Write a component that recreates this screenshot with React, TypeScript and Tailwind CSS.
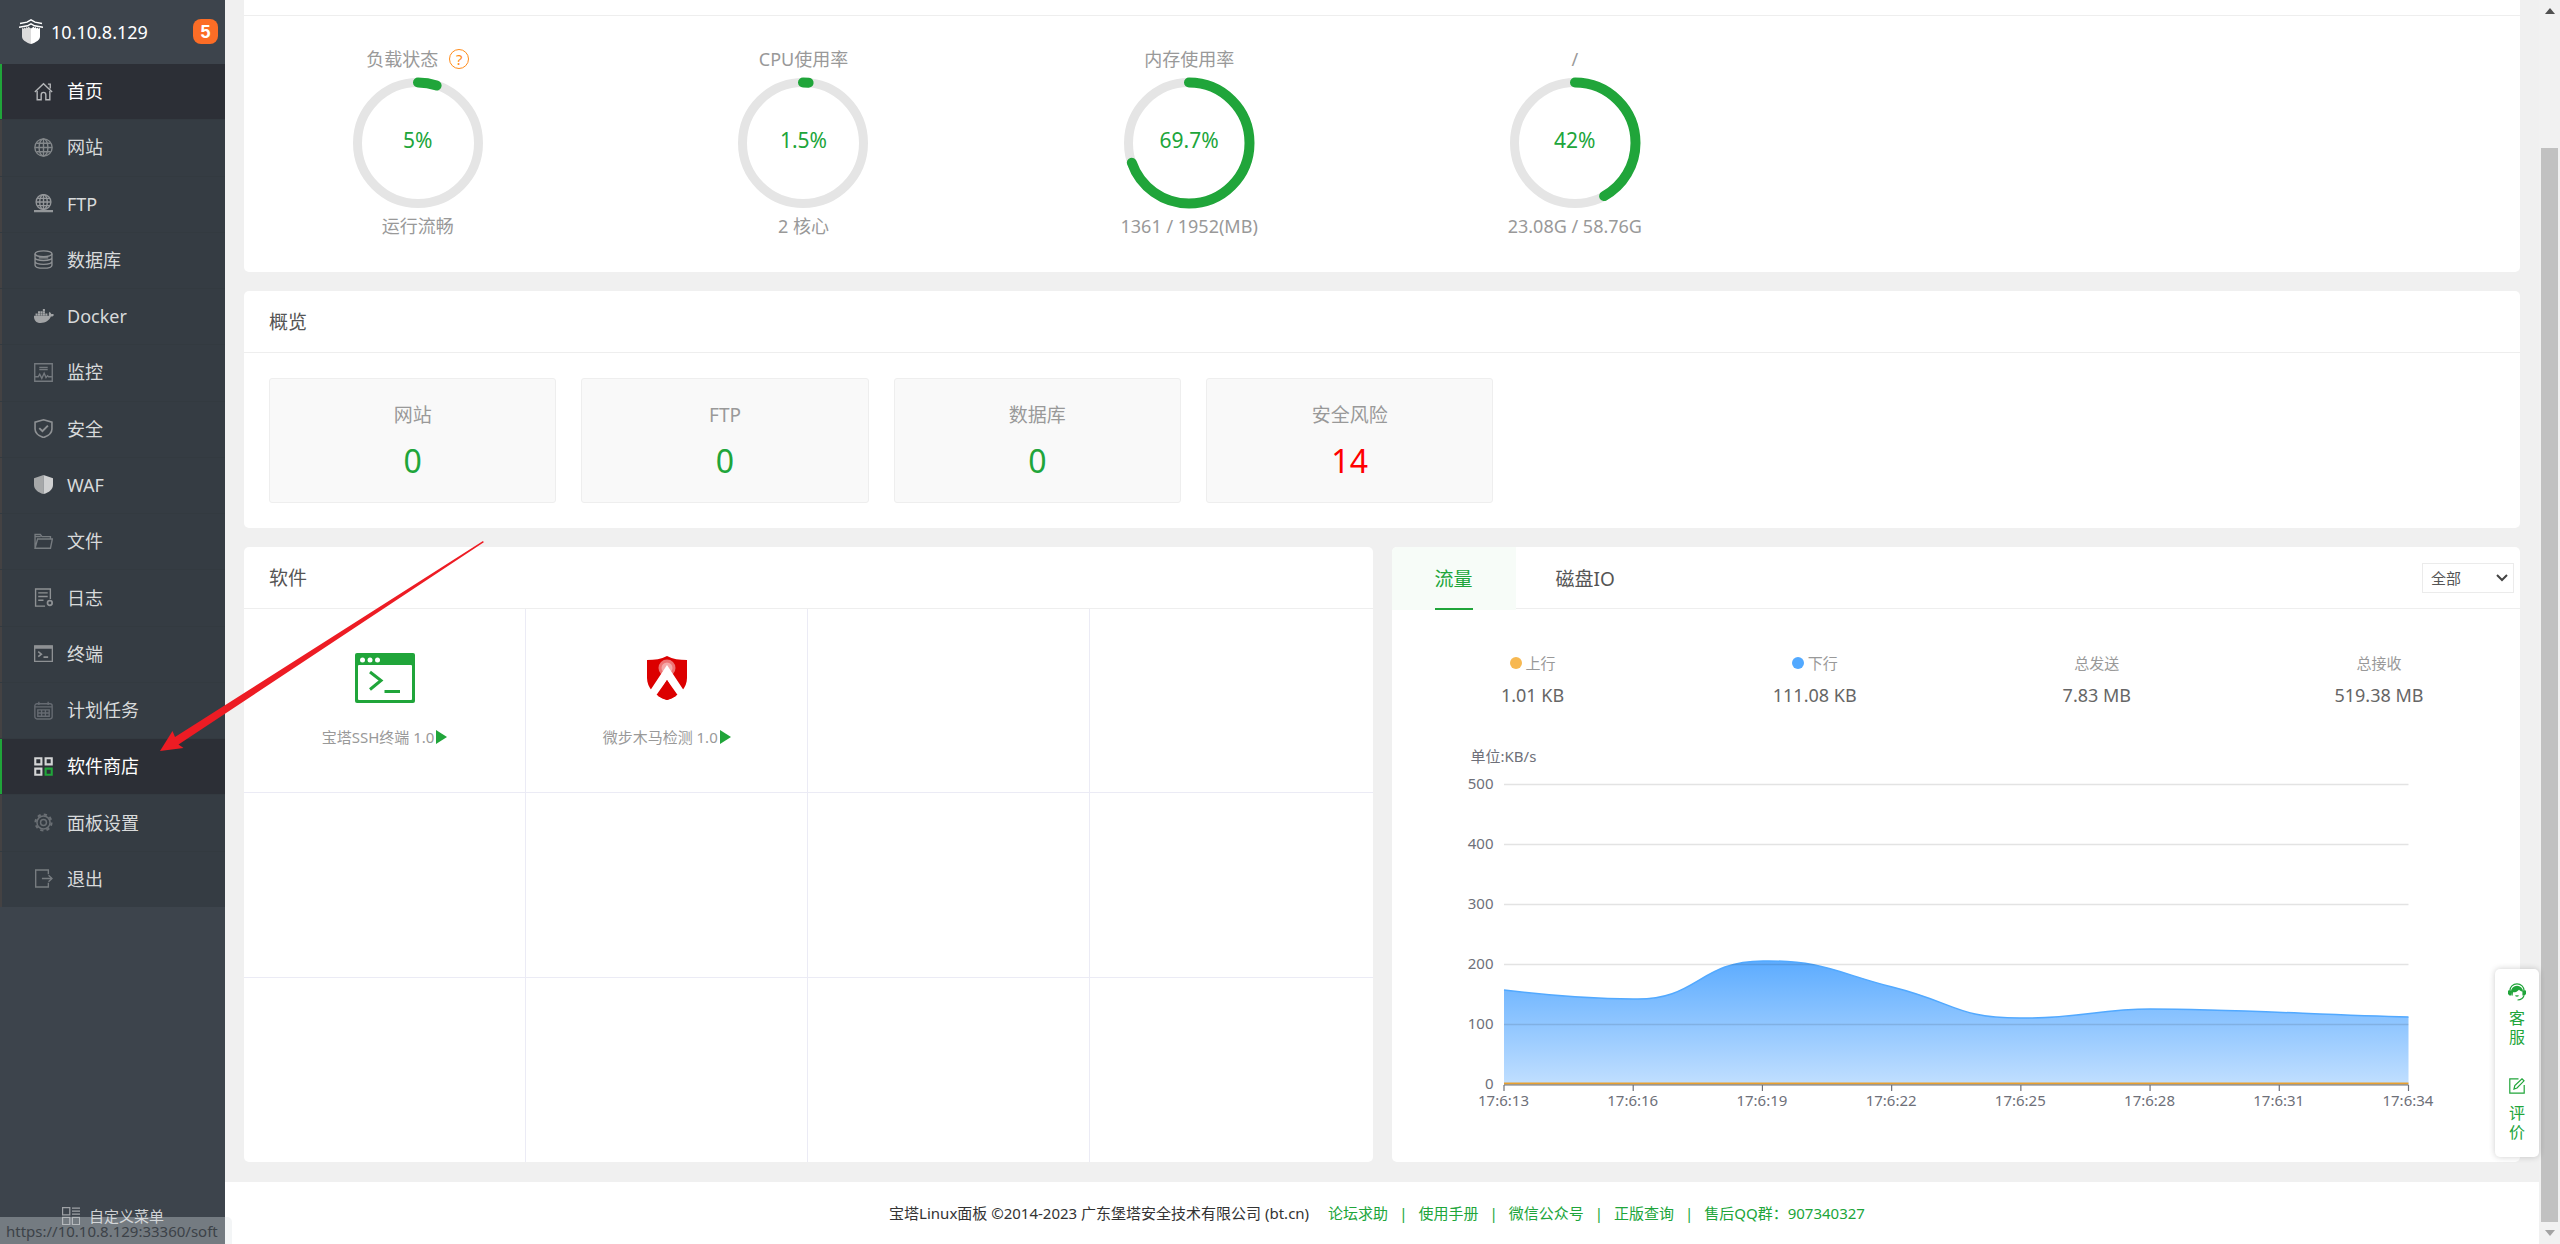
import type { ReactNode } from "react";
import { FaDocker } from "react-icons/fa";

const icons: Record<string, ReactNode> = {
  home: (
    <>
      <path d="M.8 9.4 9 1.6l8.2 7.8M13.2 2h2.2v4.2" />
      <path d="M3 8.6v8.2h3.8V12c0-1.4.9-2.2 2.2-2.2s2.2.8 2.2 2.2v4.8H15V8.6" />
    </>
  ),
  globe: (
    <>
      <circle cx="9" cy="9" r="8.2" />
      <ellipse cx="9" cy="9" rx="4.2" ry="8.2" />
      <path d="M9 .8v16.4M1 9h16M2.2 5h13.6M2.2 13h13.6" />
    </>
  ),
  ftp: (
    <>
      <circle cx="9" cy="7.6" r="7" />
      <ellipse cx="9" cy="7.6" rx="3.6" ry="7" />
      <path d="M9 .6v14M2 7.6h14M3 4.2h12M3 11h12" />
      <path d="M0 16.2h18M6.5 16.2h5" strokeWidth="2" />
    </>
  ),
  database: (
    <>
      <ellipse cx="9" cy="3.6" rx="8" ry="2.8" />
      <path d="M1 3.6v10.8c0 1.6 3.4 2.8 8 2.8s8-1.2 8-2.8V3.6M1 7.4c0 1.4 3.4 2.6 8 2.6s8-1.2 8-2.6M1 11c0 1.4 3.4 2.6 8 2.6s8-1.2 8-2.6M4.5 7.4h9" />
    </>
  ),
  monitor: (
    <>
      <path d="M.7.7h16.6v16.6H.7zM5 4.2h8M5 6.2h8" />
      <path d="M1 13h3l1.4-2.4 2 4 2.2-5 1.8 4.2 1.4-1.8 1 1H17" />
    </>
  ),
  security: (
    <>
      <path
        d="M9 .8 17 3v6.4c0 3.8-3 6.4-8 8.2-5-1.8-8-4.4-8-8.2V3z"
        strokeWidth="1.5"
      />
      <path d="m5 8.6 3 3 5.2-5.4" strokeWidth="1.8" />
    </>
  ),
  waf: (
    <>
      <path d="M9 0 0 3v6.4C0 13.6 3.6 16.4 9 18z" fill="#a6a8a9" stroke="none" />
      <path d="m9 0 9 3v6.4c0 4.2-3.6 7-9 8.6z" fill="#cfd0d1" stroke="none" />
    </>
  ),
  folder: (
    <path d="M1 15.4V2.4h5l1.6 2h8v2.2M1 15.4l2.4-8.8h14l-1.8 8.8zM1.4 4.4h5" />
  ),
  log: (
    <>
      <path d="M10.5 17.2h-9V1h14v9.4M4 4.6h9M4 8h9M4 11.6h5" />
      <circle cx="15" cy="14.2" r="2.2" strokeWidth="1.6" />
    </>
  ),
  terminal: (
    <>
      <path d="M.6 1.8h16.8v14.6H.6z" />
      <path d="M.6 3h16.8" strokeWidth="3" />
      <path d="m4 7.2 3 2.4-3 2.4M9 12.4h4.4" strokeWidth="1.5" />
    </>
  ),
  cron: (
    <>
      <rect x=".8" y="2.6" width="16.4" height="14.4" rx="2" />
      <path d="M4.6.6v3.2M13.4.6v3.2M1 5.6h16M3.6 8.4h10.8v6H3.6zM3.6 11.4h10.8M7.2 8.4v6M10.8 8.4v6" />
    </>
  ),
  store: (
    <g strokeWidth="2">
      <path d="M1.2 1.2H7V7H1.2zM11 1.2h5.8V7H11zM1.2 11H7v5.8H1.2z" />
      <path d="M11 11h5.8v5.8H11z" stroke="#20a53a" />
    </g>
  ),
  settings: (
    <>
      <circle cx="9" cy="9" r="6.2" strokeWidth="1.4" />
      <circle cx="9" cy="9" r="7.6" strokeWidth="2" strokeDasharray="3 2.97" />
      <circle cx="9" cy="9" r="2.8" strokeWidth="1.4" />
    </>
  ),
  exit: (
    <>
      <path d="M13.6 5V1h-12v16h12v-4M7.5 9H17" />
      <path d="m13.8 6 3.2 3-3.2 3" />
    </>
  ),
};

const menu = [
  { icon: "home", text: "首页", active: true, color: "text-[#b5b7b9]" },
  { icon: "globe", text: "网站", color: "text-[#84888b]" },
  { icon: "ftp", text: "FTP", color: "text-[#94979a]" },
  { icon: "database", text: "数据库", color: "text-[#8e9194]" },
  { icon: "docker", text: "Docker", color: "text-[#a2a4a6]" },
  { icon: "monitor", text: "监控", color: "text-[#74797e]" },
  { icon: "security", text: "安全", color: "text-[#8e9194]" },
  { icon: "waf", text: "WAF", color: "text-[#a6a8a9]" },
  { icon: "folder", text: "文件", color: "text-[#777c80]" },
  { icon: "log", text: "日志", color: "text-[#8e9194]" },
  { icon: "terminal", text: "终端", color: "text-[#8e9194]" },
  { icon: "cron", text: "计划任务", color: "text-[#666b72]" },
  { icon: "store", text: "软件商店", active: true, color: "text-[#d4d5d6]" },
  { icon: "settings", text: "面板设置", color: "text-[#6a6f74]" },
  { icon: "exit", text: "退出", color: "text-[#777c80]" },
];

const gauges = [
  { title: "负载状态", value: 5, desc: "运行流畅", help: true },
  { title: "CPU使用率", value: 1.5, desc: "2 核心" },
  { title: "内存使用率", value: 69.7, desc: "1361 / 1952(MB)" },
  { title: "/", value: 42, desc: "23.08G / 58.76G" },
];

const overview = [
  { title: "网站", value: 0 },
  { title: "FTP", value: 0 },
  { title: "数据库", value: 0 },
  { title: "安全风险", value: 14, danger: true },
];

const traffic = [
  { title: "上行", value: "1.01 KB", dot: "bg-[#f7b851]" },
  { title: "下行", value: "111.08 KB", dot: "bg-[#52a9ff]" },
  { title: "总发送", value: "7.83 MB" },
  { title: "总接收", value: "519.38 MB" },
];

const times = [
  "17:6:13",
  "17:6:16",
  "17:6:19",
  "17:6:22",
  "17:6:25",
  "17:6:28",
  "17:6:31",
  "17:6:34",
];

const curve =
  "M0 206C40 211 85 215 129 215C194 217 194 177 259 177C318 176 336 190 388 203C452 219 452 234 516 234C570 235 596 225 646 225C730 225 817 231 904 233";

function MenuIcon({ name }: { name: string }) {
  if (name === "docker") {
    return <FaDocker className="size-5" />;
  }
  return (
    <svg
      viewBox="0 0 18 18"
      className="size-[19px]"
      fill="none"
      stroke="currentColor"
      strokeWidth="1.3"
    >
      {icons[name]}
    </svg>
  );
}

function Sidebar() {
  return (
    <aside className="flex w-[225px] shrink-0 flex-col bg-[#3d444c]">
      <div className="flex h-16 items-center pr-[7px] pb-px pl-[19px]">
        <svg viewBox="0 0 24 25" className="h-[25px] w-6">
          <path
            d="M1 4.5 8 3.2 12 .8l4 2.4 7 1.3M0 8.2l8.5-1.4L12 4.8l3.5 2L24 8.2"
            fill="none"
            stroke="#fff"
            strokeWidth="1.4"
          />
          <path d="m3 9 2 .8V8.6l2 .8V8l2 1V7.6l3 1.8V25c-5-1.800-9-4-9-7.600z" fill="#dcdcdc" />
          <path d="m21 9-2 .8V8.6l-2 .8V8l-2 1V7.6l-3 1.8V25c5-1.800 9-4 9-7.600z" fill="#fff" />
        </svg>
        <span className="ml-2 text-lg leading-6 text-white">10.10.8.129</span>
        <span className="ml-auto flex size-[25px] items-center justify-center rounded-lg bg-[#fc6d26] font-['Liberation_Sans',sans-serif] text-lg font-bold text-white">
          5
        </span>
      </div>
      <nav className="grid h-[843px] auto-rows-fr gap-px bg-[#333a40] text-lg">
        {menu.map((item) => (
          <a
            key={item.text}
            href="#"
            className={
              item.active
                ? "flex items-center border-l-2 border-[#20a53a] bg-[#2c2f36] pb-px pl-8 text-white"
                : "flex items-center border-l-2 border-[#444243] bg-[#353c43] pb-px pl-8 text-[#d8dadb]"
            }
          >
            <span className={`w-[33px] ${item.color}`}>
              <MenuIcon name={item.icon} />
            </span>
            {item.text}
          </a>
        ))}
      </nav>
      <button className="mt-auto flex items-center gap-[9px] pb-[18px] pl-[62px] text-[15px] leading-5 text-[#cfd1d3]">
        <svg
          viewBox="0 0 18 18"
          className="size-[18px] text-[#a0a3a7]"
          fill="none"
          stroke="currentColor"
          strokeWidth="1.2"
        >
          <path d="M.6.6h7.2v7.2H.6zM.6 10.4h7.2v7.2H.6zM10.4 10.4h7.2v7.2h-7.2zM10 1.2h8M10 4.2h8M10 7.2h8" />
        </svg>
        自定义菜单
      </button>
    </aside>
  );
}

function Gauge(props: (typeof gauges)[number]) {
  const { title, value, desc, help } = props;

  return (
    <div className="flex flex-col items-center text-lg leading-[30px] text-[#999]">
      <div className="flex items-center gap-[11px]">
        {title}
        {help && (
          <button className="flex size-5 items-center justify-center rounded-full border border-[#ff8c1a] text-[15px] leading-none text-[#ff8c1a]">
            ?
          </button>
        )}
      </div>
      <div className="relative mt-[3px] mb-[2px] size-[132px]">
        <svg viewBox="0 0 132 132" fill="none" className="-rotate-90">
          <circle cx="66" cy="66" r="60.5" stroke="#e5e5e5" strokeWidth="9" />
          <circle
            cx="66"
            cy="66"
            r="60.5"
            stroke="#20a53a"
            strokeWidth="10"
            strokeLinecap="round"
            pathLength="100"
            strokeDasharray={`${value} 100`}
          />
        </svg>
        <span className="absolute inset-0 flex items-center justify-center pb-[6px] text-[21px] text-[#20a53a]">
          {value}%
        </span>
      </div>
      <div>{desc}</div>
    </div>
  );
}

function Software({ name, children }: { name: string; children: ReactNode }) {
  return (
    <div className="flex flex-col items-center pt-11">
      <div className="flex h-[50px] items-center">{children}</div>
      <a href="#" className="mt-[22px] flex items-center gap-[2px] text-[15px] leading-6 text-[#999]">
        {name}
        <svg viewBox="0 0 11 14" className="h-[14px] w-[11px] fill-[#20a53a]">
          <path d="M0 0l11 7-11 7z" />
        </svg>
      </a>
    </div>
  );
}

function SoftwareCard() {
  const cells: ReactNode[] = [
    <Software name="宝塔SSH终端 1.0">
      <svg viewBox="0 0 60 50" className="h-[50px] w-[60px]" fill="none">
        <rect width="60" height="50" rx="2" fill="#20a53a" />
        <rect x="3" y="12" width="54" height="35" rx="1" fill="#fff" />
        <circle cx="7.5" cy="7" r="2.5" fill="#fff" />
        <circle cx="15" cy="7" r="2.5" fill="#fff" />
        <circle cx="22.5" cy="7" r="2.5" fill="#fff" />
        <path d="m15 19 11 8.5-11 9M29.5 38.5H45" stroke="#20a53a" strokeWidth="3" />
      </svg>
    </Software>,
    <Software name="微步木马检测 1.0">
      <svg viewBox="0 0 40 44" className="h-11 w-10">
        <path
          d="M20 0c6 3 12 4 20 4v18c0 5-2 9-5 13-4 4-9 7-15 9-6-2-11-5-15-9-3-4-5-8-5-13V4c8 0 14-1 20-4z"
          fill="#dc0000"
        />
        <circle cx="20" cy="12" r="8.5" fill="#ee7373" />
        <circle cx="20" cy="12" r="5.5" fill="#f5a9a9" />
        <path d="M20 9 36.500 34 32 41 20 24 8 41l-4.500-7z" fill="#fff" />
        <path d="m20 24-9 16c3 2 5.500 3 9 4 3.500-1 6-2 9-4z" fill="#dc0000" />
      </svg>
    </Software>,
  ];

  return (
    <section className="rounded-[5px] bg-white">
      <h3 className="h-[62px] border-b border-[#eee] px-[25px] text-[19px] leading-[63px] text-[#555]">
        软件
      </h3>
      <div className="grid h-[553px] grid-cols-4 grid-rows-3">
        {Array.from({ length: 12 }, (_, i) => (
          <div
            key={i}
            className={
              i < 8
                ? "border-b border-[#ebebf5] not-nth-[4n]:border-r"
                : "border-[#ebebf5] not-nth-[4n]:border-r"
            }
          >
            {cells[i]}
          </div>
        ))}
      </div>
    </section>
  );
}

function Chart() {
  return (
    <div className="px-[79px] pt-[35px] text-[15px] leading-5 text-[#6e7079]">
      <div>单位:KB/s</div>
      <div className="mt-[7px] mr-[33px] flex">
        <div className="mr-[10px] flex h-80 w-[23px] flex-col justify-between">
          {[500, 400, 300, 200, 100, 0].map((n) => (
            <span key={n} className="flex justify-end">
              {n}
            </span>
          ))}
        </div>
        <div className="flex-1 pt-[11px]">
          <svg
            viewBox="0 0 904 301"
            preserveAspectRatio="none"
            className="h-[301px] w-full overflow-visible"
            fill="none"
          >
            <defs>
              <linearGradient id="down" x1="0" y1="0" x2="0" y2="1">
                <stop offset="0" stopColor="#5dacff" />
                <stop offset="1" stopColor="#c1dfff" />
              </linearGradient>
            </defs>
            <path d={`${curve}V301H0z`} fill="url(#down)" />
            <path d={curve} stroke="#52a9ff" strokeWidth="1.5" />
            {[0, 60, 120, 180, 240].map((y) => (
              <path
                key={y}
                d={`M0 ${y + 0.5}H904`}
                stroke="#000"
                strokeOpacity=".11"
                strokeWidth="1.5"
              />
            ))}
            <path d="M0 299.5H904" stroke="#e8a030" strokeWidth="2" />
            <path d="M0 301H904" stroke="#6e7079" strokeWidth="1.2" />
            {times.map((t, i) => (
              <path
                key={t}
                d={`M${(i * 904) / 7} 301v6`}
                stroke="#6e7079"
                strokeWidth="1.2"
              />
            ))}
          </svg>
          <div className="mt-[5px] flex justify-between">
            {times.map((t) => (
              <span key={t} className="flex w-0 justify-center">
                {t}
              </span>
            ))}
          </div>
        </div>
      </div>
    </div>
  );
}

function TrafficCard() {
  return (
    <section className="rounded-[5px] bg-white">
      <div className="flex h-[62px] border-b border-[#eee] text-[19px] text-[#555]">
        <button className="-mb-[2px] rounded-tl-[5px] bg-[#f7fcf8] px-[43px] text-[#20a53a]">
          <span className="flex h-full items-center border-b-2 border-[#20a53a] pt-[3px]">
            流量
          </span>
        </button>
        <button className="px-10 pt-[3px]">磁盘IO</button>
        <div className="relative mt-4 mr-[6px] ml-auto h-[30px] w-[92px]">
          <select
            aria-label="网卡"
            className="size-full appearance-none border border-[#ebebeb] bg-white pl-2 text-[15px] leading-7"
          >
            <option>全部</option>
          </select>
          <svg
            viewBox="0 0 12 8"
            className="pointer-events-none absolute top-[11px] right-[6px] h-2 w-3"
            fill="none"
            stroke="#444"
            strokeWidth="2"
          >
            <path d="m1 1 5 5 5-5" />
          </svg>
        </div>
      </div>
      <div className="grid grid-cols-4 pt-[42px] text-center">
        {traffic.map((item) => (
          <div key={item.title}>
            <div className="flex items-center justify-center gap-1 text-[15px] leading-6 text-[#999]">
              {item.dot && <i className={`size-3 rounded-full ${item.dot}`} />}
              {item.title}
            </div>
            <div className="mt-1 text-lg leading-8 text-[#666]">{item.value}</div>
          </div>
        ))}
      </div>
      <Chart />
    </section>
  );
}

function Footer() {
  return (
    <footer className="flex flex-1 items-center justify-center gap-[11px] bg-white pr-[10px] text-[15px] text-[#20a53a]">
      <span className="mr-2 text-[#333]">
        宝塔Linux面板 ©2014-2023 广东堡塔安全技术有限公司 (bt.cn)
      </span>
      <a href="#">论坛求助</a>
      <span>|</span>
      <a href="#">使用手册</a>
      <span>|</span>
      <a href="#">微信公众号</a>
      <span>|</span>
      <a href="#">正版查询</a>
      <span>|</span>
      <a href="#">售后QQ群：907340327</a>
    </footer>
  );
}

function SideTools() {
  return (
    <div className="absolute right-[21px] bottom-[87px] flex h-[188px] w-11 flex-col items-center justify-between rounded-[5px] bg-white pt-[14px] pb-[15px] text-base leading-[19px] text-[#20a53a] shadow-[0_0_6px_rgba(0,0,0,0.2)]">
      <button className="flex w-4 flex-col items-center gap-2">
        <svg viewBox="0 0 18 18" className="size-[18px]" fill="none" stroke="currentColor">
          <path d="M1.8 8a7.2 7.2 0 0 1 14.4 0" strokeWidth="1.2" />
          <path
            d="M3 8.5a6 5.8 0 0 1 12 0c-1.5 0-3-.6-4-1.8-1.5 1.8-3.6 2.8-6 2.6L4.600 13C3.600 11.600 3 10 3 8.500z"
            fill="currentColor"
            stroke="none"
          />
          <path
            d="M0 7.5h3.6v5H1.5L0 11zM18 7.5h-3.6v5h2.1L18 11z"
            fill="currentColor"
            stroke="none"
          />
          <path d="M16 12.500c-.8 2.600-3 4.300-6.500 4.500M7.500 12.500c1 .8 2 .8 3 0" strokeWidth="1.2" />
        </svg>
        客服
      </button>
      <button className="flex w-4 flex-col items-center gap-[10px]">
        <svg
          viewBox="0 0 16 16"
          className="size-4"
          fill="none"
          stroke="currentColor"
          strokeWidth="1.2"
        >
          <path d="M9.500.8H.8v14.400h14.400V7" />
          <path d="m5 11 .8-3.400L13 .8l2 2-7 7.200z" />
        </svg>
        评价
      </button>
    </div>
  );
}

function Scrollbar() {
  return (
    <div className="flex w-[21px] shrink-0 flex-col items-center bg-[#f1f1f1] py-2">
      <svg viewBox="0 0 10 6" className="h-[6px] w-[10px] fill-[#505050]">
        <path d="M5 0l5 6H0z" />
      </svg>
      <div className="mt-[134px] mb-2 w-[17px] flex-1 bg-[#c1c1c1]" />
      <svg viewBox="0 0 10 6" className="h-[6px] w-[10px] fill-[#a3a3a3]">
        <path d="M0 0h10L5 6z" />
      </svg>
    </div>
  );
}

export default function App() {
  return (
    <div className="relative flex min-h-screen bg-[#f0f0f0] font-['Noto_Sans','Noto_Sans_CJK_SC',sans-serif]">
      <Sidebar />
      <div className="flex min-w-0 flex-1 flex-col">
        <main className="flex flex-col gap-[19px] px-[19px] pb-5">
          <section className="h-[272px] rounded-b-[5px] bg-white pt-[15px]">
            <div className="border-t border-[#eee]" />
            <div className="-mx-[19px] grid grid-cols-6 pt-[28px]">
              {gauges.map((item) => (
                <Gauge key={item.title} {...item} />
              ))}
            </div>
          </section>

          <section className="rounded-[5px] bg-white">
            <h3 className="h-[62px] border-b border-[#eee] px-[25px] text-[19px] leading-[63px] text-[#555]">
              概览
            </h3>
            <div className="p-[25px]">
              <div className="grid w-[55%] grid-cols-4 gap-[25px]">
                {overview.map((item) => (
                  <div
                    key={item.title}
                    className="h-[125px] rounded-[3px] border border-[#eee] bg-[#f9f9f9] pt-5 text-center"
                  >
                    <div className="text-[19px] leading-8 text-[#999]">{item.title}</div>
                    <a
                      href="#"
                      className={
                        item.danger
                          ? "block text-[32px] leading-[60px] text-[#f00]"
                          : "block text-[32px] leading-[60px] text-[#20a53a]"
                      }
                    >
                      {item.value}
                    </a>
                  </div>
                ))}
              </div>
            </div>
          </section>

          <div className="grid grid-cols-2 gap-[19px]">
            <SoftwareCard />
            <TrafficCard />
          </div>
        </main>
        <Footer />
      </div>
      <Scrollbar />
      <SideTools />

      <div className="absolute bottom-0 left-0 h-[27px] w-[232px] rounded-tr-[5px] bg-[#dee1e6]/35 pl-[6px] text-[15px] leading-[29px] text-[#3c4248]">
        https://10.10.8.129:33360/soft
      </div>
      <svg
        viewBox="0 0 324 211"
        className="pointer-events-none absolute top-[541px] left-40 h-[211px] w-[324px] fill-[#ed1c24]"
      >
        <path d="M0 210l12.500-20 2.500 6L323 0l.8 1.200L18.500 203.500l5 3.500z" />
      </svg>
    </div>
  );
}
